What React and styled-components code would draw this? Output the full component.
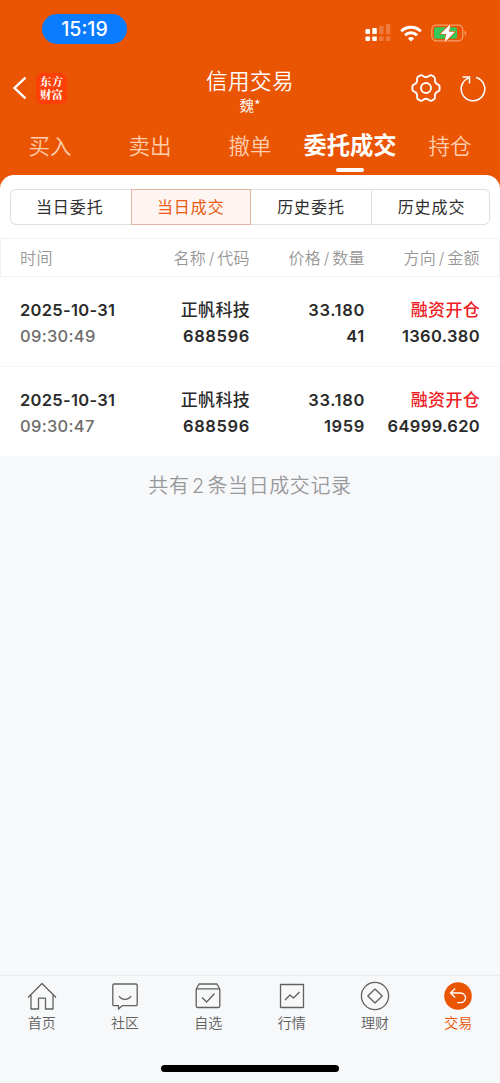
import React from 'react';
import styled, { createGlobalStyle } from 'styled-components';

const GlobalStyle = createGlobalStyle`
  * {
    box-sizing: border-box;
  }
  body {
    margin: 0;
    background: #fff;
    font-family: Inter, "Noto Sans CJK SC", sans-serif;
    color: #2b2b2b;
  }
`;

const Page = styled.div`
  display: flex;
  flex-direction: column;
  width: 500px;
  height: 1083px;
  overflow: hidden;
  border-bottom: 1px solid #fff;
  background: #f7f8fa;
`;

const Header = styled.header`
  height: 190px;
  flex: none;
  background: #ea5504;
  color: #fff;
`;

const StatusBar = styled.div`
  display: flex;
  align-items: center;
  justify-content: space-between;
  height: 60px;
  padding: 6px 33px 0 42px;
`;

const TimePill = styled.div`
  width: 85px;
  height: 30px;
  margin-top: -9px;
  border-radius: 15px;
  background: #0a7cff;
  font-size: 19.5px;
  font-weight: 500;
  line-height: 30px;
  text-align: center;
`;

const StatusIcons = styled.div`
  display: flex;
  align-items: center;
  gap: 9px;
`;

const NavBar = styled.div`
  display: grid;
  grid-template-columns: 150px 1fr 150px;
  height: 56px;
`;

const NavLeft = styled.div`
  display: flex;
  align-items: center;
  gap: 10px;
  padding-left: 12px;
`;

const NavRight = styled(NavLeft)`
  justify-content: flex-end;
  gap: 19px;
  padding: 0 14px 0 0;
`;

const Logo = styled.div`
  width: 31px;
  height: 31px;
  padding-top: 2px;
  border-radius: 6px;
  background: #fd3f08;
  font-family: "Noto Serif CJK SC", "Noto Sans CJK SC", serif;
  font-size: 11.5px;
  font-weight: 700;
  line-height: 13px;
  text-align: center;
`;

const NavTitle = styled.div`
  padding-top: 8px;
  font-weight: 350;
  text-align: center;
`;

const Title = styled.div`
  font-size: 21.5px;
  line-height: 27px;
  letter-spacing: 0.5px;
`;

const Account = styled.div`
  font-family: "Noto Sans CJK SC", sans-serif;
  font-size: 14.5px;
  line-height: 19px;
`;

const Tabs = styled.nav`
  display: grid;
  grid-template-columns: repeat(5, 100px);
  height: 59px;
`;

const Tab = styled.div`
  display: flex;
  flex-direction: column;
  align-items: center;
  padding-top: 14px;
  color: ${(p) => (p.$active ? '#fff' : '#ffceac')};
  font-size: ${(p) => (p.$active ? '23.3px' : '21.5px')};
  font-weight: ${(p) => (p.$active ? 700 : 350)};
  line-height: 32px;
  white-space: nowrap;

  &::after {
    content: '';
    width: 28px;
    height: 4px;
    margin-top: 6px;
    border-radius: 2px;
    background: ${(p) => (p.$active ? '#fff' : 'transparent')};
  }
`;

const Panel = styled.main`
  margin-top: -15px;
  border-radius: 14px 14px 0 0;
  background: #fff;
`;

const Segments = styled.div`
  display: grid;
  grid-template-columns: 120.5px 120.5px 121px 118px;
  height: 36px;
  margin: 14px 10px 0;
`;

const Segment = styled.div`
  border: 1px solid ${(p) => (p.$active ? '#e2b6a2' : '#dfdfdf')};
  border-left-width: ${(p) => (p.$first || p.$active ? '1px' : '0')};
  border-right-width: ${(p) => (p.$first ? '0' : '1px')};
  background: ${(p) => (p.$active ? '#fef4f1' : '#fff')};
  color: ${(p) => (p.$active ? '#ea5a10' : '#2f2f2f')};
  font-size: 16px;
  line-height: 34px;
  letter-spacing: 0.9px;
  text-align: center;

  &:first-child {
    padding-right: 2px;
    border-radius: 6px 0 0 6px;
  }
  &:last-child {
    padding-left: 2px;
    border-radius: 0 6px 6px 0;
  }
`;

const Columns = styled.div`
  display: grid;
  grid-template-columns: 115px 115px 115px 115px;
  padding: 0 19px;
  text-align: right;

  > :first-child {
    text-align: left;
  }
`;

const TableHead = styled(Columns)`
  height: 39px;
  margin-top: 13px;
  border: 1px solid #f2f2f2;
  color: #979797;
  font-size: 16px;
  font-weight: 350;
  line-height: 38px;
  letter-spacing: 0.4px;
`;

const Slash = styled.i`
  margin: 0 2.5px;
  font-style: normal;
`;

const Row = styled(Columns)`
  height: ${(p) => (p.$last ? '89px' : '90px')};
  padding: 20px 20px 0;
  border-bottom: ${(p) => (p.$last ? '0' : '1px')} solid #f5f5f5;
  font-size: 16.5px;
  font-weight: 600;
  line-height: 26px;
  letter-spacing: 0.65px;
`;

const Cell = styled.div`
  display: flex;
  flex-direction: column;
  white-space: nowrap;
  align-items: ${(p) => (p.$left ? 'flex-start' : 'flex-end')};
`;

const Name = styled.span`
  color: ${(p) => (p.$red ? '#ee2024' : 'inherit')};
  font-size: 17px;
  font-weight: 500;
  letter-spacing: 0.3px;
`;

const DateText = styled.span`
  letter-spacing: 0.3px;
`;

const Time = styled.span`
  color: #6c6c6c;
  font-weight: 500;
  letter-spacing: 0.3px;
`;

const Amount = styled.span`
  letter-spacing: 0.35px;
`;

const Summary = styled.div`
  flex: 1;
  padding-top: 15px;
  color: #98999b;
  font-size: 20px;
  font-weight: 350;
  line-height: 30px;
  letter-spacing: 0.6px;
  text-align: center;
`;

const Count = styled.span`
  margin: 0 2.5px;
`;

const BottomBar = styled.footer`
  height: 107px;
  flex: none;
  border-top: 1px solid #ebecee;
`;

const BottomTabs = styled.div`
  display: grid;
  grid-template-columns: repeat(6, 1fr);
  height: 89px;
`;

const BottomTab = styled.div`
  display: flex;
  flex-direction: column;
  align-items: center;
  padding-top: 5px;
  color: ${(p) => (p.$active ? '#ea5504' : '#606060')};
  font-size: 14px;
  font-weight: 350;
  line-height: 20px;

  svg {
    margin-bottom: 2px;
  }
`;

const HomeIndicator = styled.div`
  width: 178px;
  height: 7px;
  margin: 0 auto;
  border-radius: 4px;
  background: #000;
`;

const SignalIcon = () => (
  <svg width="26" height="18" viewBox="0 0 26 18" fill="#fff">
    <rect x="0.5" y="5" width="4.5" height="5" rx="0.8" />
    <rect x="7.3" y="4" width="4.5" height="6" rx="0.8" />
    <rect x="0.5" y="12.5" width="4.5" height="4.5" rx="0.8" />
    <rect x="7.3" y="12.5" width="4.5" height="4.5" rx="0.8" />
    <g opacity="0.22">
      <rect x="14.2" y="2" width="4.3" height="8" rx="0.8" />
      <rect x="21" y="0" width="4.3" height="10" rx="0.8" />
      <rect x="14.2" y="12.5" width="4.3" height="4.5" rx="0.8" />
      <rect x="21" y="12.5" width="4.3" height="4.5" rx="0.8" />
    </g>
  </svg>
);

const WifiIcon = () => (
  <svg width="22" height="17" viewBox="0 0 22 17" fill="none" stroke="#fff" strokeWidth="3">
    <path d="M1.2 6.2a14 14 0 0 1 19.6 0" />
    <path d="M5 10.3a8.6 8.6 0 0 1 12 0" />
    <path d="M11 16.5l-3.1-3.1a4.5 4.5 0 0 1 6.2 0z" fill="#fff" stroke="none" />
  </svg>
);

const BatteryIcon = () => (
  <svg width="36" height="20" viewBox="0 0 36 20">
    <rect x="0.8" y="2.2" width="31" height="15.6" rx="4.5" fill="none" stroke="#f6a06c" strokeWidth="1.2" />
    <path d="M33.6 7.5c2 .8 2 4.2 0 5z" fill="#f6a06c" />
    <rect x="3" y="4.3" width="23" height="11.4" rx="2.5" fill="#34c759" />
    <path d="M19.5 1L9.5 11h5.7l-1.7 8.5L24 8.8h-6z" fill="#fff" stroke="#ea5504" strokeWidth="1.2" paintOrder="stroke" />
  </svg>
);

const BackIcon = () => (
  <svg width="14" height="24" viewBox="0 0 14 24" fill="none" stroke="#fff" strokeWidth="2.4">
    <path d="M13.5 1.5L2.5 12l11 10.5" />
  </svg>
);

const GearIcon = () => (
  <svg width="30" height="30" viewBox="0 0 30 30" fill="none" stroke="#fff" strokeWidth="1.9" strokeLinejoin="round">
    <path d="M9.5 2.3C11.2 1.4 12.3 4.2 15 4.2S18.8 1.4 20.5 2.3L23.2 3.9C24.7 5 23.3 7.2 24.4 9.5C25.5 11.8 28.6 11 28.6 13.2V16.8C28.6 19 25.5 18.2 24.4 20.5C23.3 22.8 24.7 25 23.2 26.1L20.5 27.7C18.8 28.6 17.7 25.8 15 25.8S11.2 28.6 9.5 27.7L6.8 26.1C5.3 25 6.7 22.8 5.6 20.5C4.5 18.2 1.4 19 1.4 16.8V13.2C1.4 11 4.5 11.8 5.6 9.5C6.7 7.2 5.3 5 6.8 3.9Z" />
    <circle cx="15" cy="15" r="5" />
  </svg>
);

const RefreshIcon = () => (
  <svg width="26" height="28" viewBox="0 0 26 28" fill="none" stroke="#fff" strokeWidth="1.5">
    <path d="M16 3.6A11.8 11.8 0 1 1 9 3.9" />
    <path d="M2.5 3.1h7v6.4" />
  </svg>
);

const LineIcon = ({ children }) => (
  <svg width="30" height="30" viewBox="0 0 30 30" fill="none" stroke="currentColor" strokeWidth="1.3" strokeLinejoin="round">
    {children}
  </svg>
);

const bottomTabs = [
  {
    label: '首页',
    icon: (
      <LineIcon>
        <path d="M1 16.5L15 2.5l14 14M4 14v14h7.5V17.2h7V28H26V14" />
      </LineIcon>
    ),
  },
  {
    label: '社区',
    icon: (
      <LineIcon>
        <path d="M4 3h22a1.2 1.2 0 0 1 1.2 1.2v19.3A1.2 1.2 0 0 1 26 24.7H12.2L8.5 28v-3.3H4a1.2 1.2 0 0 1-1.2-1.2V4.2A1.2 1.2 0 0 1 4 3z" />
        <path d="M9 15.2c2.5 4.2 9.5 4.2 12 0" />
      </LineIcon>
    ),
  },
  {
    label: '自选',
    icon: (
      <LineIcon>
        <path d="M3.2 8L6 3h18l2.8 5v17a1.5 1.5 0 0 1-1.5 1.5H4.7A1.5 1.5 0 0 1 3.2 25zM3.2 7.8h23.6" />
        <path d="M9 16.5l4.7 4.5 7.8-8.5" />
      </LineIcon>
    ),
  },
  {
    label: '行情',
    icon: (
      <LineIcon>
        <rect x="3.5" y="3.5" width="23" height="23" rx="0.5" />
        <path d="M8 19l5-5 3.5 3 6-6" />
      </LineIcon>
    ),
  },
  {
    label: '理财',
    icon: (
      <LineIcon>
        <circle cx="15" cy="15" r="13.6" />
        <path d="M15 8l7.2 7-7.2 7-7.2-7z" />
      </LineIcon>
    ),
  },
  {
    label: '交易',
    active: true,
    icon: (
      <LineIcon>
        <circle cx="15" cy="15" r="13.8" fill="#ea5504" stroke="none" />
        <path d="M12.2 7.5L7.5 12l4.7 4.5M7.5 12h10.2a4.7 4.7 0 0 1 0 9.7h-3.5" stroke="#fff" />
      </LineIcon>
    ),
  },
];

const tabs = ['买入', '卖出', '撤单', '委托成交', '持仓'];
const segments = ['当日委托', '当日成交', '历史委托', '历史成交'];
const headings = [['名称', '代码'], ['价格', '数量'], ['方向', '金额']];

const deals = [
  { date: '2025-10-31', time: '09:30:49', name: '正帆科技', code: '688596', price: '33.180', count: '41', side: '融资开仓', amount: '1360.380' },
  { date: '2025-10-31', time: '09:30:47', name: '正帆科技', code: '688596', price: '33.180', count: '1959', side: '融资开仓', amount: '64999.620' },
];

const App = () => {
  return (
    <>
      <GlobalStyle />
      <Page>
        <Header>
          <StatusBar>
            <TimePill>15:19</TimePill>
            <StatusIcons>
              <SignalIcon />
              <WifiIcon />
              <BatteryIcon />
            </StatusIcons>
          </StatusBar>
          <NavBar>
            <NavLeft>
              <BackIcon />
              <Logo>东方<br />财富</Logo>
            </NavLeft>
            <NavTitle>
              <Title>信用交易</Title>
              <Account>魏*</Account>
            </NavTitle>
            <NavRight>
              <GearIcon />
              <RefreshIcon />
            </NavRight>
          </NavBar>
          <Tabs>
            {tabs.map((t) => (
              <Tab key={t} $active={t === '委托成交'}>{t}</Tab>
            ))}
          </Tabs>
        </Header>
        <Panel>
          <Segments>
            {segments.map((s, i) => (
              <Segment key={s} $first={i === 0} $active={i === 1}>{s}</Segment>
            ))}
          </Segments>
          <TableHead>
            <span>时间</span>
            {headings.map(([top, bottom]) => (
              <span key={top}>{top}<Slash>/</Slash>{bottom}</span>
            ))}
          </TableHead>
          {deals.map((d, i) => (
            <Row key={d.time} $last={i === deals.length - 1}>
              <Cell $left>
                <DateText>{d.date}</DateText>
                <Time>{d.time}</Time>
              </Cell>
              <Cell>
                <Name>{d.name}</Name>
                <span>{d.code}</span>
              </Cell>
              <Cell>
                <span>{d.price}</span>
                <span>{d.count}</span>
              </Cell>
              <Cell>
                <Name $red>{d.side}</Name>
                <Amount>{d.amount}</Amount>
              </Cell>
            </Row>
          ))}
        </Panel>
        <Summary>共有<Count>2</Count>条当日成交记录</Summary>
        <BottomBar>
          <BottomTabs>
            {bottomTabs.map((t) => (
              <BottomTab key={t.label} $active={t.active}>
                {t.icon}
                {t.label}
              </BottomTab>
            ))}
          </BottomTabs>
          <HomeIndicator />
        </BottomBar>
      </Page>
    </>
  );
};

export default App;
